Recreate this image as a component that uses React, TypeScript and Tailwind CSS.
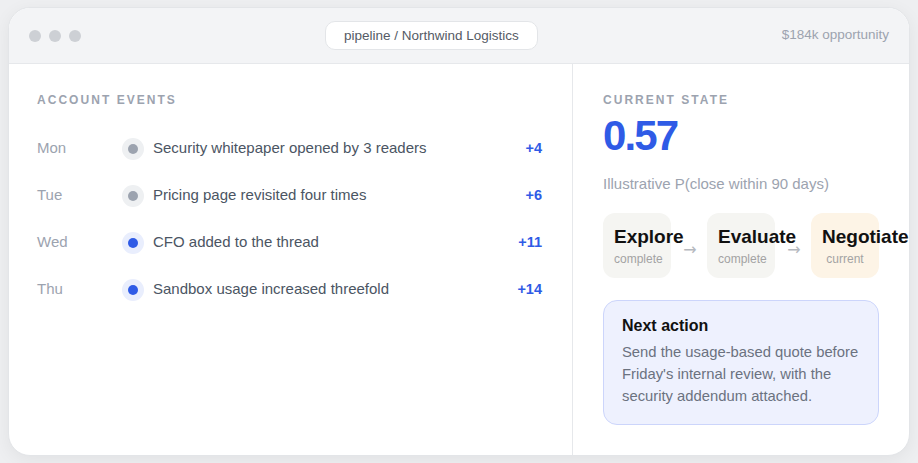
import React from 'react';

const events = [
  { day: 'Mon', text: 'Security whitepaper opened by 3 readers', score: '+4', hot: false },
  { day: 'Tue', text: 'Pricing page revisited four times', score: '+6', hot: false },
  { day: 'Wed', text: 'CFO added to the thread', score: '+11', hot: true },
  { day: 'Thu', text: 'Sandbox usage increased threefold', score: '+14', hot: true },
];

const stages = [
  { name: 'Explore', status: 'complete', current: false },
  { name: 'Evaluate', status: 'complete', current: false },
  { name: 'Negotiate', status: 'current', current: true },
];

export default function App() {
  return (
    <div className="min-h-screen bg-[#eeeff1] px-2 py-[7px] font-['Liberation_Sans',Arial,sans-serif]">
      <div className="flex h-[449px] flex-col overflow-hidden rounded-[22px] border border-[#e3e5e8] bg-white shadow-[0_4px_18px_rgba(0,0,0,0.06)]">
        {/* window bar */}
        <div className="flex h-14 shrink-0 items-center justify-between border-b border-[#e6e8eb] bg-[#f3f4f6] px-5">
          <div className="flex gap-[8px]">
            <span className="h-3 w-3 rounded-full bg-[#cdd0d5]" />
            <span className="h-3 w-3 rounded-full bg-[#cdd0d5]" />
            <span className="h-3 w-3 rounded-full bg-[#cdd0d5]" />
          </div>
          <div className="rounded-[10px] border border-[#e3e5e8] bg-white px-[18px] py-[6px] text-[13.5px] leading-[15px] text-[#555b65]">
            pipeline / Northwind Logistics
          </div>
          <div className="text-[13.5px] text-[#9ca3af]">$184k opportunity</div>
        </div>

        <div className="flex flex-1">
          {/* events */}
          <div className="w-[564px] shrink-0 border-r border-[#e6e8eb] pl-7 pr-[30px] pt-7">
            <h2 className="text-[12px] font-bold uppercase leading-4 tracking-[0.17em] text-[#9ca3af]">
              Account events
            </h2>
            <div className="mt-[17px]">
              {events.map((e) => (
                <div key={e.day} className="flex h-[47px] items-center">
                  <span className="w-[85px] text-[15px] text-[#9ca3af]">{e.day}</span>
                  <span
                    className={
                      e.hot
                        ? 'flex h-[22px] w-[22px] items-center justify-center rounded-full bg-[#e9eefd]'
                        : 'flex h-[22px] w-[22px] items-center justify-center rounded-full bg-[#eef0f2]'
                    }
                  >
                    <span className={e.hot ? 'h-[10px] w-[10px] rounded-full bg-[#2f5be6]' : 'h-[10px] w-[10px] rounded-full bg-[#9ca3af]'} />
                  </span>
                  <span className="ml-[9px] flex-1 text-[15px] text-[#4b5563]">{e.text}</span>
                  <span className="text-[14.5px] font-bold text-[#2f5be6]">{e.score}</span>
                </div>
              ))}
            </div>
          </div>

          {/* state */}
          <div className="w-[336px] min-w-0 shrink-0 px-[30px] pt-7">
            <h2 className="text-[12px] font-bold uppercase leading-4 tracking-[0.17em] text-[#9ca3af]">
              Current state
            </h2>
            <div className="mt-[6px] text-[42px] font-bold leading-[44px] tracking-[-0.045em] text-[#2f5be6]">0.57</div>
            <p className="mt-4 text-[15px] leading-5 text-[#9ca3af]">Illustrative P(close within 90 days)</p>

            <div className="mt-[19px] flex items-center">
              {stages.map((s, i) => (
                <React.Fragment key={s.name}>
                  {i > 0 && (
                    <span className="w-9 shrink-0 pt-2 pl-[2px] text-center font-['DejaVu_Sans',sans-serif] text-[16px] leading-5 text-[#b4b8be]">
                      →
                    </span>
                  )}
                  <div
                    className={
                      s.current
                        ? 'h-[65px] min-w-0 flex-1 rounded-[12px] bg-[#fdf4e6] px-[11px] pt-[13px] text-center'
                        : 'h-[65px] min-w-0 flex-1 rounded-[12px] bg-[#f5f5f2] px-[11px] pt-[13px] text-center'
                    }
                  >
                    <div className="whitespace-nowrap text-[19px] font-bold leading-[22px] text-[#111]">{s.name}</div>
                    <div className="mt-1 whitespace-nowrap text-[12px] leading-[14px] text-[#a3a3a3]">{s.status}</div>
                  </div>
                </React.Fragment>
              ))}
            </div>

            <div className="mt-[22px] rounded-[14px] border border-[#ccd5fb] bg-[#eef1fe] pb-[17px] pl-[18px] pr-[12px] pt-[15px]">
              <div className="text-[16px] font-bold leading-5 text-[#111]">Next action</div>
              <p className="mt-[5px] text-[14.8px] leading-[22px] text-[#6b7280]">
                Send the usage-based quote before Friday's internal review, with the security addendum attached.
              </p>
            </div>
          </div>
        </div>
      </div>
    </div>
  );
}
